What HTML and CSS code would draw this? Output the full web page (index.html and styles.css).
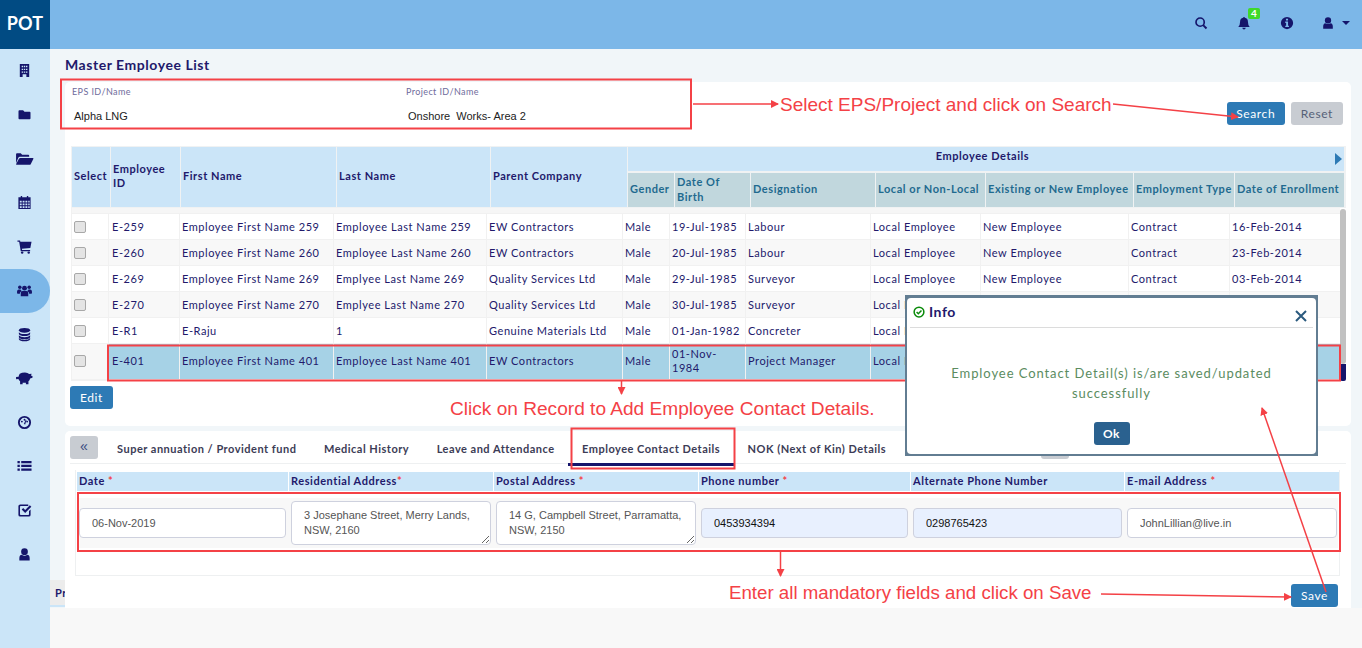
FILE: index.html
```html
<!DOCTYPE html>
<html lang="en">
<head>
    <meta charset="UTF-8">
    <meta name="viewport" content="width=device-width, initial-scale=1.0">
    <title>Master Employee List</title>
    <link rel="stylesheet" href="styles.css">
</head>
<body>
    <div class="app">
        <aside class="sidebar">
            <div class="logo">POT</div>
            <nav class="nav">
                <a class="nav-item"><svg class="nav-icon" viewBox="0 0 16 16"><path fill-rule="evenodd" d="M3 1h10v14H3zM5 3v1.500h1.500V3zM7.300 3v1.500h1.500V3zM9.600 3v1.500h1.500V3zM5 6v1.500h1.500V6zM7.300 6v1.500h1.500V6zM9.600 6v1.500h1.500V6zM5 9v1.500h1.500V9zM7.300 9v1.500h1.500V9zM9.600 9v1.500h1.500V9zM6 12v3h4v-3z"/></svg></a>
                <a class="nav-item"><svg class="nav-icon" viewBox="0 0 16 16"><path d="M2 3.500h4.500L8 5h5.500q.9 0 .9 1v6q0 1-.9 1h-11q-.9 0-.9-1V4.500q0-1 .9-1z"/></svg></a>
                <a class="nav-item"><svg class="nav-icon nav-icon-wide" viewBox="0 0 20 16"><path d="M1 13V3.500q0-1 1-1h4L7.500 4H14q1 0 1 1v1.200H5q-1 0-1.600 1zM5.500 7.500H19q.8 0 .4.900L16.600 14q-.4.600-1 .600H1.500q-.8 0-.4-.800L4.200 8q.5-.5 1.300-.5z"/></svg></a>
                <a class="nav-item"><svg class="nav-icon" viewBox="0 0 16 16"><path fill-rule="evenodd" d="M4 1h1.500v1.500h5V1H12v1.500h2.500V15h-13V2.500H4zM3 6v2h2V6zM6 6v2h2V6zM9 6v2h2V6zM12 6v2h1.500V6zM3 9v2h2V9zM6 9v2h2V9zM9 9v2h2V9zM12 9v2h1.500V9zM3 12v1.800h2V12zM6 12v1.800h2V12zM9 12v1.800h2V12zM12 12v1.800h1.500V12z"/></svg></a>
                <a class="nav-item"><svg class="nav-icon" viewBox="0 0 16 16"><path d="M.5 1.500h2.700l.4 1.500H15.500l-1.300 6.500-9 1 .3 1.300h8.500v1.300H4L2.300 2.800H.5z"/><circle cx="5.500" cy="14.500" r="1.300"/><circle cx="12.500" cy="14.500" r="1.300"/></svg></a>
                <a class="nav-item active"><svg class="nav-icon" viewBox="0 0 16 16"><circle cx="8" cy="5.500" r="2.600"/><circle cx="3" cy="4.500" r="1.900"/><circle cx="13" cy="4.500" r="1.900"/><path d="M4 14v-3q0-2.500 2-2.500h4q2 0 2 2.500v3zM0 10q0-3 2-3h1.800q.5 1.200 1.200 1.500Q3 9.500 3 11.500H.8Q0 11.500 0 10zM16 10q0-3-2-3h-1.800q-.5 1.200-1.200 1.500 2 1 2 3h2.200q.8 0 .8-1.500z"/></svg></a>
                <a class="nav-item"><svg class="nav-icon" viewBox="0 0 16 16"><ellipse cx="8" cy="3.500" rx="6" ry="2.500"/><path d="M2 5.500q1.500 2 6 2t6-2v2q-1 2.200-6 2.200T2 7.500zM2 8.800q1.500 2 6 2t6-2v2q-1 2.200-6 2.200t-6-2.200zM2 11.800q1.500 2 6 2t6-2V13q-1 2.200-6 2.200T2 13z"/></svg></a>
                <a class="nav-item"><svg class="nav-icon nav-icon-wide" viewBox="0 0 20 16"><path d="M5 3q2-1.500 5.500-1.500 3 0 4.500 1.800l2.500-.3-.5 2 1.500.3v1.800L16 8q-.5 2-1.800 3v3h-2.700v-1.500H8V14H5.300v-3Q4 10 3.500 8.500L1 8.800V6.500l2.700-.5Q4 4.300 5 3z"/></svg></a>
                <a class="nav-item"><svg class="nav-icon" viewBox="0 0 16 16"><path fill-rule="evenodd" d="M8 1a7 7 0 1 0 0 14A7 7 0 0 0 8 1zm0 2a5 5 0 0 1 5 5 5 5 0 0 1-10 0 5 5 0 0 1 5-5z"/><circle cx="5.200" cy="7" r="1"/><circle cx="10.800" cy="7" r="1"/><circle cx="8" cy="5" r="1"/><path d="M7.300 9.500 9.300 5l.8.300L8.700 10z"/></svg></a>
                <a class="nav-item"><svg class="nav-icon" viewBox="0 0 16 16"><path d="M.5 2h2.500v2.500H.5zM4.500 2h11v2.500h-11zM.5 6h2.500v2.500H.5zM4.500 6h11v2.500h-11zM.5 10h2.500v2.500H.5zM4.500 10h11v2.500h-11z"/></svg></a>
                <a class="nav-item"><svg class="nav-icon" viewBox="0 0 16 16"><path d="M3.500 1.500h8.500v1.800H4q-.8 0-.8.800v7.900q0 .8.800.8h8q.8 0 .8-.8V8.500l1.700-1.700v6q0 1.700-2 1.700h-9q-2 0-2-1.700V3.200q0-1.700 2-1.700z"/><path d="m5 7 1.600-1.600 2.100 2.100 5-5L15.300 4l-6.600 6.700z"/></svg></a>
                <a class="nav-item"><svg class="nav-icon" viewBox="0 0 16 16"><circle cx="8" cy="5" r="3.600"/><path d="M2.500 14.500v-2.500Q2.500 8.500 5 8.200q3 2 6 0 2.500.3 2.500 3.800v2.500z"/></svg></a>
            </nav>
        </aside>

        <div class="main">
            <header class="topbar">
                <svg class="top-icon" viewBox="0 0 16 16"><circle cx="7" cy="7" r="4.700" fill="none" stroke="currentColor" stroke-width="1.900"/><path d="m10.500 10.500 3.800 3.800" stroke="currentColor" stroke-width="2.200"/></svg>
                <span class="bell">
                    <svg class="top-icon" viewBox="0 0 16 16"><path d="M8 1q1 0 1 1 3.500.6 3.500 4.500 0 4 2 6H1.500q2-2 2-6Q3.500 2.600 7 2q0-1 1-1zM6 13.500h4q-.3 1.800-2 1.800t-2-1.800z"/></svg>
                    <span class="badge">4</span>
                </span>
                <svg class="top-icon" viewBox="0 0 16 16"><path fill-rule="evenodd" d="M8 1a7 7 0 1 0 0 14A7 7 0 0 0 8 1zM6.800 3.200h2.400v2H6.800zM6 6.400h3.200v4.600h1v1.600H6V11h1V8H6z"/></svg>
                <span class="user-menu">
                    <svg class="top-icon" viewBox="0 0 16 16"><circle cx="8" cy="5" r="3.600"/><path d="M2.500 14.500v-2.500Q2.500 8.500 5 8.200q3 2 6 0 2.500.3 2.500 3.800v2.500z"/></svg>
                    <span class="caret"></span>
                </span>
            </header>

            <div class="page">
                <h1 class="page-title">Master Employee List</h1>

                <section class="card card-list">
                    <div class="filter-row">
                        <div class="filter-field">
                            <label>EPS ID/Name</label>
                            <span class="filter-value">Alpha LNG</span>
                        </div>
                        <div class="filter-field">
                            <label>Project ID/Name</label>
                            <span class="filter-value">Onshore&nbsp; Works- Area 2</span>
                        </div>
                        <div class="filter-actions">
                            <button class="btn btn-primary">Search</button>
                            <button class="btn btn-muted">Reset</button>
                        </div>
                    </div>

                    <div class="grid">
                        <div class="grid-head">
                            <div class="th th-tall">Select</div>
                            <div class="th th-tall">Employee ID</div>
                            <div class="th th-tall">First Name</div>
                            <div class="th th-tall">Last Name</div>
                            <div class="th th-tall">Parent Company</div>
                            <div class="th th-group">Employee Details<span class="group-arrow"></span></div>
                            <div class="th th-sub">Gender</div>
                            <div class="th th-sub">Date Of Birth</div>
                            <div class="th th-sub">Designation</div>
                            <div class="th th-sub">Local or Non-Local</div>
                            <div class="th th-sub">Existing or New Employee</div>
                            <div class="th th-sub">Employment Type</div>
                            <div class="th th-sub">Date of Enrollment</div>
                        </div>
                        <div class="grid-body">
                            <div class="rows">
                                <div class="row row-spacer"></div>
                                <div class="row">
                                    <div class="td"><input type="checkbox" class="check"></div><div class="td">E-259</div><div class="td">Employee First Name 259</div><div class="td">Employee Last Name 259</div><div class="td">EW Contractors</div><div class="td">Male</div><div class="td">19-Jul-1985</div><div class="td">Labour</div><div class="td">Local Employee</div><div class="td">New Employee</div><div class="td">Contract</div><div class="td">16-Feb-2014</div>
                                </div>
                                <div class="row row-alt">
                                    <div class="td"><input type="checkbox" class="check"></div><div class="td">E-260</div><div class="td">Employee First Name 260</div><div class="td">Employee Last Name 260</div><div class="td">EW Contractors</div><div class="td">Male</div><div class="td">20-Jul-1985</div><div class="td">Labour</div><div class="td">Local Employee</div><div class="td">New Employee</div><div class="td">Contract</div><div class="td">23-Feb-2014</div>
                                </div>
                                <div class="row">
                                    <div class="td"><input type="checkbox" class="check"></div><div class="td">E-269</div><div class="td">Employee First Name 269</div><div class="td">Emplyee Last Name 269</div><div class="td">Quality Services Ltd</div><div class="td">Male</div><div class="td">29-Jul-1985</div><div class="td">Surveyor</div><div class="td">Local Employee</div><div class="td">New Employee</div><div class="td">Contract</div><div class="td">03-Feb-2014</div>
                                </div>
                                <div class="row row-alt">
                                    <div class="td"><input type="checkbox" class="check"></div><div class="td">E-270</div><div class="td">Employee First Name 270</div><div class="td">Emplyee Last Name 270</div><div class="td">Quality Services Ltd</div><div class="td">Male</div><div class="td">30-Jul-1985</div><div class="td">Surveyor</div><div class="td">Local Employee</div><div class="td">New Employee</div><div class="td">Contract</div><div class="td">03-Feb-2014</div>
                                </div>
                                <div class="row">
                                    <div class="td"><input type="checkbox" class="check"></div><div class="td">E-R1</div><div class="td">E-Raju</div><div class="td">1</div><div class="td">Genuine Materials Ltd</div><div class="td">Male</div><div class="td">01-Jan-1982</div><div class="td">Concreter</div><div class="td">Local Employee</div><div class="td">New Employee</div><div class="td">Contract</div><div class="td">01-Jan-2014</div>
                                </div>
                                <div class="row row-tall row-selected">
                                    <div class="td"><input type="checkbox" class="check"></div><div class="td">E-401</div><div class="td">Employee First Name 401</div><div class="td">Employee Last Name 401</div><div class="td">EW Contractors</div><div class="td">Male</div><div class="td">01-Nov-1984</div><div class="td">Project Manager</div><div class="td">Local Employee</div><div class="td">New Employee</div><div class="td">Contract</div><div class="td">06-Nov-2019</div>
                                </div>
                            </div>
                            <div class="scrollbar"><span class="scroll-thumb"></span><span class="scroll-end"></span></div>
                        </div>
                    </div>
                    <button class="btn btn-primary btn-edit">Edit</button>
                </section>

                <section class="card card-detail">
                    <div class="tabs">
                        <button class="tab-toggle">&laquo;</button>
                        <a class="tab">Super annuation / Provident fund</a>
                        <a class="tab">Medical History</a>
                        <a class="tab">Leave and Attendance</a>
                        <a class="tab tab-active">Employee Contact Details</a>
                        <a class="tab">NOK (Next of Kin) Details</a>
                        <span class="tab-scroll"></span>
                    </div>
                    <div class="contact-table">
                        <div class="contact-head">
                            <div class="ch">Date <em>*</em></div>
                            <div class="ch">Residential Address<em>*</em></div>
                            <div class="ch">Postal Address <em>*</em></div>
                            <div class="ch">Phone number <em>*</em></div>
                            <div class="ch">Alternate Phone Number</div>
                            <div class="ch">E-mail Address <em>*</em></div>
                        </div>
                        <div class="contact-row">
                            <div class="cd"><input class="field" type="text" value="06-Nov-2019"></div>
                            <div class="cd"><textarea class="field field-area">3 Josephane Street, Merry Lands, NSW, 2160</textarea></div>
                            <div class="cd"><textarea class="field field-area">14 G, Campbell Street, Parramatta, NSW, 2150</textarea></div>
                            <div class="cd"><input class="field field-filled" type="text" value="0453934394"></div>
                            <div class="cd"><input class="field field-filled" type="text" value="0298765423"></div>
                            <div class="cd"><input class="field" type="text" value="JohnLillian@live.in"></div>
                        </div>
                    </div>
                    <div class="detail-actions">
                        <button class="btn btn-primary btn-save">Save</button>
                    </div>
                </section>
                <div class="status-strip">Project</div>
            </div>
            <div class="page-end"></div>
        </div>
    </div>

    <!-- tutorial highlight boxes sit under the dialog, arrows over it -->
    <svg class="callout-boxes" viewBox="0 0 1362 648">
        <g fill="none" stroke="#f44146" stroke-width="2">
            <rect x="61" y="79.500" width="630" height="49"/>
            <rect x="108" y="345.500" width="1232" height="35"/>
            <rect x="571.500" y="428.500" width="163" height="40"/>
            <rect x="78" y="493" width="1262" height="58"/>
        </g>
    </svg>

    <div class="modal">
        <div class="modal-inner">
            <div class="modal-header">
                <svg class="modal-check" viewBox="0 0 16 16"><circle cx="8" cy="8" r="6.500" fill="none" stroke="#0a8a0a" stroke-width="2"/><path d="m4.800 8 2.300 2.300 4.200-4.300" fill="none" stroke="#0a8a0a" stroke-width="2"/></svg>
                <span class="modal-title">Info</span>
                <svg class="modal-close" viewBox="0 0 12 12"><path d="m1 1 10 10M11 1 1 11" stroke="#2b5a7e" stroke-width="2"/></svg>
            </div>
            <p class="modal-message">Employee Contact Detail(s) is/are saved/updated successfully</p>
            <button class="btn btn-ok">Ok</button>
        </div>
    </div>

    <svg class="callout-lines" viewBox="0 0 1362 648">
        <defs>
            <marker id="head" markerWidth="8" markerHeight="8" refX="7" refY="4" orient="auto" markerUnits="userSpaceOnUse"><path d="M0 0 8 4 0 8z" fill="#f44146"/></marker>
        </defs>
        <g fill="none" stroke="#f44146" stroke-width="1.500">
            <path d="M693 104H778" marker-end="url(#head)"/>
            <path d="M1113 104 1238 117" marker-end="url(#head)"/>
            <path d="M621.500 380V394" marker-end="url(#head)"/>
            <path d="M780.500 552V576" marker-end="url(#head)"/>
            <path d="M1101 594 1291 597" marker-end="url(#head)"/>
            <path d="M1326 592 1262 408" marker-end="url(#head)"/>
        </g>
    </svg>
    <span class="callout callout-search">Select EPS/Project and click on Search</span>
    <span class="callout callout-record">Click on Record to Add Employee Contact Details.</span>
    <span class="callout callout-save">Enter all mandatory fields and click on Save</span>
</body>
</html>
```

FILE: styles.css
```css
* {
    box-sizing: border-box;
}
html, body {
    margin: 0;
    height: 100%;
    overflow: hidden;
}
body {
    font-family: Lato, "Open Sans", sans-serif;
    font-size: 11px;
    letter-spacing: 0.55px;
    color: #22196b;
    background-color: #f8f8f8;
}
.app {
    display: flex;
    height: 648px;
}

/* sidebar */
.sidebar {
    width: 50px;
    flex-shrink: 0;
    background-color: #cbe5f8;
}
.logo {
    height: 49px;
    background-color: #014b83;
    color: #fff;
    font-size: 18px;
    font-weight: 700;
    letter-spacing: 0.2px;
    line-height: 46px;
    text-align: center;
}
.nav-item {
    display: flex;
    align-items: center;
    justify-content: center;
    height: 44px;
    padding: 0 2px 2px 0;
    color: #15156b;
}
.nav-item.active {
    background-color: #7cb7e8;
    border-radius: 0 22px 22px 0;
}
.nav-icon {
    width: 15px;
    height: 15px;
    fill: currentColor;
}
.nav-icon-wide {
    width: 19px;
}

/* top bar */
.main {
    flex: 1;
    display: flex;
    flex-direction: column;
    min-width: 0;
}
.topbar {
    height: 49px;
    flex-shrink: 0;
    display: flex;
    align-items: center;
    justify-content: flex-end;
    gap: 29px;
    padding: 0 12px 3px 0;
    background-color: #7cb7e8;
    color: #15156b;
}
.top-icon {
    display: block;
    width: 14px;
    height: 14px;
    fill: currentColor;
}
.bell {
    position: relative;
}
.badge {
    position: absolute;
    top: -8px;
    left: 11px;
    width: 12px;
    height: 11px;
    border-radius: 2px;
    background-color: #3fd92a;
    color: #fff;
    font-size: 10px;
    font-weight: 700;
    letter-spacing: 0;
    line-height: 11px;
    text-align: center;
}
.user-menu {
    display: flex;
    align-items: center;
    gap: 7px;
    margin-left: -2px;
}
.caret {
    border-top: 4px solid #15156b;
    border-left: 4px solid transparent;
    border-right: 4px solid transparent;
}

/* page */
.page {
    height: 559px;
    flex-shrink: 0;
    padding: 0 11px 0 15px;
    background-color: #f1f6f9;
    position: relative;
}
.page-end {
    flex: 1;
    background-color: #f8f8f8;
}
.page-title {
    margin: 0;
    height: 33px;
    font-size: 14px;
    font-weight: 700;
    letter-spacing: 0.55px;
    line-height: 31px;
}
.card {
    background-color: #fff;
    border-radius: 5px;
}
.card-list {
    height: 344px;
    margin-bottom: 5px;
}
.card-detail {
    height: 177px;
    border-radius: 5px 5px 0 0;
    position: relative;
    z-index: 2;
}
.status-strip {
    position: absolute;
    left: 0;
    top: 531px;
    width: 60px;
    height: 27px;
    padding-left: 5px;
    background-color: #ececec;
    border-bottom: 2px solid #cbe5f8;
    font-weight: 700;
    line-height: 25px;
    z-index: 1;
}

/* filters */
.filter-row {
    display: flex;
    height: 64px;
    padding-left: 7px;
}
.filter-field {
    width: 334px;
    padding-top: 4px;
}
.filter-field label {
    display: block;
    font-size: 9px;
    letter-spacing: 0.4px;
    line-height: 12px;
    color: #6f6c9c;
}
.filter-value {
    display: block;
    margin: 11px 0 0 2px;
    font-family: "Liberation Sans", Arial, sans-serif;
    font-size: 11px;
    letter-spacing: 0;
    line-height: 14px;
    color: #222;
}
.filter-actions {
    margin-left: auto;
    display: flex;
    gap: 6px;
    padding: 20px 8px 0 0;
}
.btn {
    height: 23px;
    border: none;
    border-radius: 3px;
    padding: 0;
    font-family: Lato, sans-serif;
    font-size: 12px;
    letter-spacing: 0.6px;
    cursor: pointer;
}
.btn-primary {
    background-color: #2d7ab5;
    color: #fff;
    padding: 0 9.500px;
}
.btn-muted {
    background-color: #c8ccd2;
    color: #566178;
    padding: 0 10px;
}

/* employee grid */
.grid {
    margin-left: 6px;
    width: 1275px;
}
.grid-head {
    display: grid;
    grid-template-columns: 38px 69px 155px 153px 136px 46px 75px 124px 109px 147px 100px 109px;
    grid-template-rows: 24px 34px;
    column-gap: 1px;
    row-gap: 2px;
    height: 62px;
    padding: 1px;
    background-color: #f0f2f3;
    font-weight: 700;
}
.th {
    display: flex;
    align-items: center;
    padding: 0 2px;
    background-color: #cbe5f8;
    line-height: 15px;
}
.th-tall {
    grid-row: 1 / span 2;
    padding-bottom: 3px;
    line-height: 14px;
}
.th-group {
    grid-column: 6 / span 7;
    grid-row: 1;
    justify-content: center;
    align-items: flex-start;
    padding: 1px 9px 0 2px;
    position: relative;
}
.group-arrow {
    position: absolute;
    right: 2px;
    top: 6px;
    border-left: 7px solid #2d7ab5;
    border-top: 6px solid transparent;
    border-bottom: 6px solid transparent;
}
.th-sub {
    grid-row: 2;
    padding-bottom: 3px;
    background-color: #c1d7dd;
    color: #1f6a8f;
}
.grid-body {
    display: flex;
}
.rows {
    width: 1269px;
    background-color: #f1f1f1;
}
.row {
    display: grid;
    grid-template-columns: 36px 70px 153px 152px 135px 46px 75px 124px 109px 147px 100px 110px;
    gap: 1px;
    margin-bottom: 1px;
    margin-left: 1px;
    height: 25px;
}
.row-spacer {
    height: 5px;
    background-color: #f6f6f6;
}
.row-tall {
    height: 35px;
    margin-bottom: 0;
}
.td {
    display: flex;
    align-items: center;
    padding: 0 2px;
    background-color: #fff;
    line-height: 14px;
}
.td:nth-child(2) {
    padding-left: 3px;
}
.row-alt .td {
    background-color: #f8f8f8;
}
.row-selected .td {
    padding-bottom: 2px;
    background-color: #a6d2e6;
}
.row-selected .td:first-child {
    background-color: #f8f8f8;
}
.check {
    appearance: none;
    margin: 0;
    width: 12px;
    height: 12px;
    background-color: #e4e4e4;
    border: 1px solid #a8a8a8;
    border-radius: 2px;
}
.scrollbar {
    width: 6px;
    display: flex;
    flex-direction: column;
    padding-top: 1px;
}
.scroll-thumb {
    height: 155px;
    background-color: #c1c1c1;
    border-radius: 3px;
}
.scroll-end {
    height: 17px;
    background-color: #15156b;
    border-radius: 0 0 2px 2px;
}
.btn-edit {
    margin: 5px 0 0 5px;
    padding: 0 10px;
}

/* tabs */
.tabs {
    display: flex;
    align-items: flex-start;
    height: 33px;
    margin: 0 5px;
    padding-top: 5px;
    border-bottom: 1px solid #eef0f1;
    position: relative;
}
.tab-toggle {
    width: 28px;
    height: 23px;
    margin-right: 5px;
    padding: 0 0 3px;
    border: none;
    border-radius: 3px;
    background-color: #c8ccd2;
    color: #3a4a80;
    font-size: 14px;
}
.tab {
    padding: 0 13.750px;
    font-weight: 700;
    color: #3c3c56;
    letter-spacing: 0.5px;
    line-height: 25px;
}
.tab:first-of-type {
    padding-left: 14px;
}
.tab-active {
    height: 30px;
    border-bottom: 3px solid #15156b;
}
.tab-scroll {
    position: absolute;
    left: 971px;
    top: 25px;
    width: 28px;
    height: 3px;
    background-color: #c8ccd2;
    border-radius: 0 0 3px 3px;
}

/* contact form */
.contact-table {
    margin: 6px 11px 0 10px;
    height: 106px;
    padding: 2px 1px 0;
    border: 1px solid #eef0f1;
    border-top: none;
    background-color: #fff;
}
.contact-head, .contact-row {
    display: grid;
    grid-template-columns: 211px 204px 204px 211px 213px 214px;
    gap: 1px;
}
.contact-head {
    height: 19px;
    margin-bottom: 7px;
}
.ch {
    padding: 0 2px;
    background-color: #cbe5f8;
    font-weight: 700;
    line-height: 17px;
}
.ch em {
    color: #f44146;
    font-style: normal;
}
.contact-row {
    height: 50px;
    background-color: #f8f8f8;
}
.cd {
    display: flex;
    align-items: center;
    padding: 0 2px;
}
.field {
    display: block;
    width: 100%;
    height: 30px;
    padding: 0 12px;
    border: 1px solid #ced1de;
    border-radius: 4px;
    background-color: #fff;
    font-family: "Liberation Sans", Arial, sans-serif;
    font-size: 11px;
    color: #555;
}
.field-area {
    height: 44px;
    padding: 6px 12px 0;
    line-height: 15px;
    overflow: hidden;
}
.field-filled {
    background-color: #e8f0fe;
    color: #111;
}
.detail-actions {
    display: flex;
    justify-content: flex-end;
    padding: 8px 13px 0 0;
}
.btn-save {
    padding: 0 10px;
}

/* info dialog */
.modal {
    position: absolute;
    left: 905px;
    top: 295px;
    width: 413px;
    height: 161px;
    padding: 3px 2px 2px;
    background-color: #627d92;
    z-index: 5;
}
.modal-inner {
    height: 100%;
    background-color: #fff;
    border-radius: 4px;
    padding: 0 3px;
    text-align: center;
}
.modal-header {
    display: flex;
    align-items: center;
    height: 30px;
    margin-bottom: 35px;
    padding: 0 0 2px 3px;
    border-bottom: 1px solid #dcdcdc;
    text-align: left;
    position: relative;
}
.modal-check {
    width: 12px;
    height: 12px;
    margin-right: 4px;
}
.modal-title {
    font-size: 14px;
    font-weight: 700;
}
.modal-close {
    position: absolute;
    right: 6px;
    top: 12px;
    width: 12px;
    height: 12px;
}
.modal-message {
    margin: 0 30px 19px;
    font-size: 13px;
    line-height: 20px;
    letter-spacing: 0.92px;
    color: #5b8c5f;
}
.btn-ok {
    background-color: #2a618f;
    color: #fff;
    width: 36px;
    font-weight: 700;
}

/* callouts */
.callout-boxes, .callout-lines {
    position: absolute;
    left: 0;
    top: 0;
    width: 1362px;
    height: 648px;
    pointer-events: none;
}
.callout-boxes {
    z-index: 4;
}
.callout-lines {
    z-index: 10;
}
.callout {
    position: absolute;
    z-index: 11;
    font-family: "Liberation Sans", Arial, sans-serif;
    font-size: 19px;
    letter-spacing: 0;
    line-height: 21px;
    color: #f44146;
    white-space: nowrap;
}
.callout-search {
    left: 780px;
    top: 94px;
}
.callout-record {
    left: 450px;
    top: 398px;
    font-size: 19.100px;
}
.callout-save {
    left: 729px;
    top: 582px;
    font-size: 18.700px;
}
```
